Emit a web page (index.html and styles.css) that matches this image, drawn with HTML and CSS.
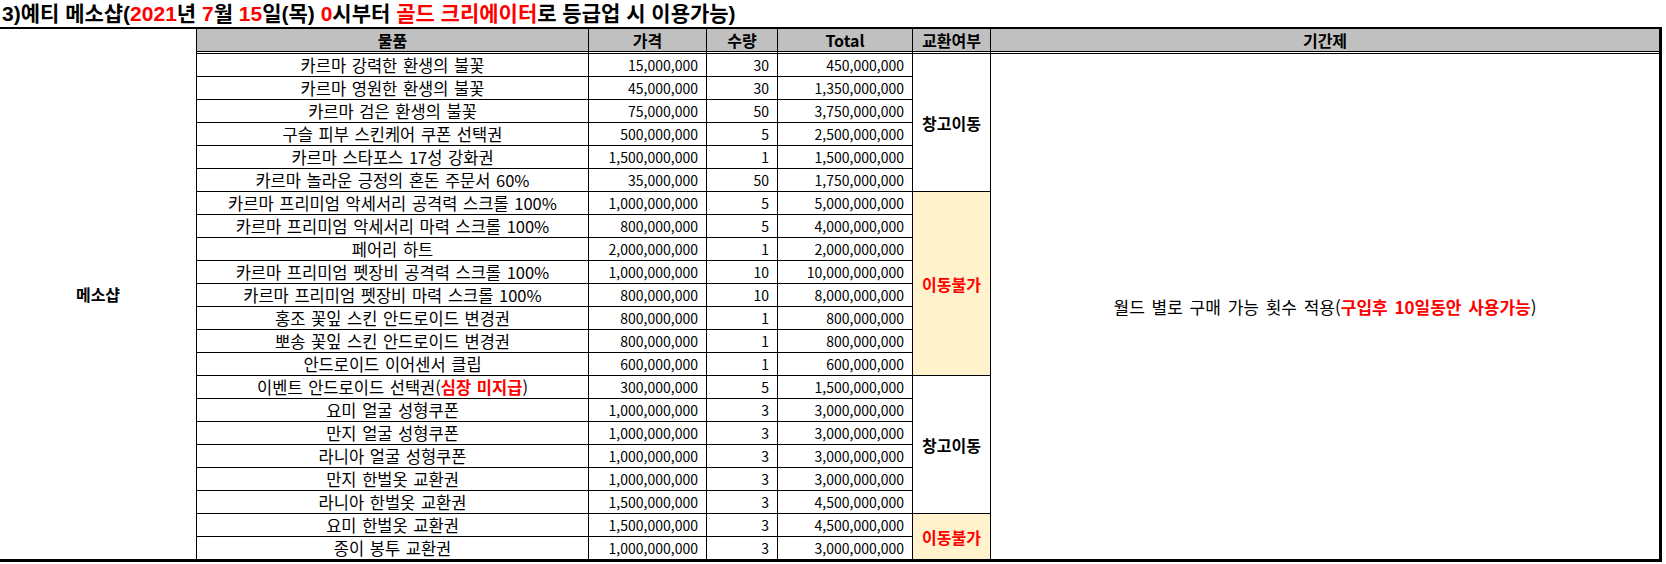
FILE: index.html
```html
<!DOCTYPE html>
<html lang="ko">
<head>
<meta charset="utf-8">
<title>예티 메소샵</title>
<link rel="stylesheet" href="styles.css">
</head>
<body>
<div class="title">3)예티 메소샵(<span class="red">2021</span>년 <span class="red">7</span>월 <span class="red">15</span>일(목) <span class="red">0</span>시부터 <span class="red">골드 크리에이터</span>로 등급업 시 이용가능)</div>
<div class="sheet">
  <div class="cell shop">메소샵</div>
  <div class="cell hd c-name">물품</div>
  <div class="cell hd c-price">가격</div>
  <div class="cell hd c-qty">수량</div>
  <div class="cell hd c-total">Total</div>
  <div class="cell hd c-swap">교환여부</div>
  <div class="cell hd c-period">기간제</div>

  <div class="cell c-name">카르마 강력한 환생의 불꽃</div>
  <div class="cell num c-price">15,000,000</div>
  <div class="cell num c-qty">30</div>
  <div class="cell num c-total">450,000,000</div>
  <div class="cell c-swap swap-move span6">창고이동</div>
  <div class="cell c-period period">월드 별로 구매 가능 횟수 적용(<span class="red strong">구입후 10일동안 사용가능</span>)</div>

  <div class="cell c-name">카르마 영원한 환생의 불꽃</div>
  <div class="cell num c-price">45,000,000</div>
  <div class="cell num c-qty">30</div>
  <div class="cell num c-total">1,350,000,000</div>

  <div class="cell c-name">카르마 검은 환생의 불꽃</div>
  <div class="cell num c-price">75,000,000</div>
  <div class="cell num c-qty">50</div>
  <div class="cell num c-total">3,750,000,000</div>

  <div class="cell c-name">구슬 피부 스킨케어 쿠폰 선택권</div>
  <div class="cell num c-price">500,000,000</div>
  <div class="cell num c-qty">5</div>
  <div class="cell num c-total">2,500,000,000</div>

  <div class="cell c-name">카르마 스타포스 17성 강화권</div>
  <div class="cell num c-price">1,500,000,000</div>
  <div class="cell num c-qty">1</div>
  <div class="cell num c-total">1,500,000,000</div>

  <div class="cell c-name">카르마 놀라운 긍정의 혼돈 주문서 60%</div>
  <div class="cell num c-price">35,000,000</div>
  <div class="cell num c-qty">50</div>
  <div class="cell num c-total">1,750,000,000</div>

  <div class="cell c-name">카르마 프리미엄 악세서리 공격력 스크롤 100%</div>
  <div class="cell num c-price">1,000,000,000</div>
  <div class="cell num c-qty">5</div>
  <div class="cell num c-total">5,000,000,000</div>
  <div class="cell c-swap swap-lock span8">이동불가</div>

  <div class="cell c-name">카르마 프리미엄 악세서리 마력 스크롤 100%</div>
  <div class="cell num c-price">800,000,000</div>
  <div class="cell num c-qty">5</div>
  <div class="cell num c-total">4,000,000,000</div>

  <div class="cell c-name">페어리 하트</div>
  <div class="cell num c-price">2,000,000,000</div>
  <div class="cell num c-qty">1</div>
  <div class="cell num c-total">2,000,000,000</div>

  <div class="cell c-name">카르마 프리미엄 펫장비 공격력 스크롤 100%</div>
  <div class="cell num c-price">1,000,000,000</div>
  <div class="cell num c-qty">10</div>
  <div class="cell num c-total">10,000,000,000</div>

  <div class="cell c-name">카르마 프리미엄 펫장비 마력 스크롤 100%</div>
  <div class="cell num c-price">800,000,000</div>
  <div class="cell num c-qty">10</div>
  <div class="cell num c-total">8,000,000,000</div>

  <div class="cell c-name">홍조 꽃잎 스킨 안드로이드 변경권</div>
  <div class="cell num c-price">800,000,000</div>
  <div class="cell num c-qty">1</div>
  <div class="cell num c-total">800,000,000</div>

  <div class="cell c-name">뽀송 꽃잎 스킨 안드로이드 변경권</div>
  <div class="cell num c-price">800,000,000</div>
  <div class="cell num c-qty">1</div>
  <div class="cell num c-total">800,000,000</div>

  <div class="cell c-name">안드로이드 이어센서 클립</div>
  <div class="cell num c-price">600,000,000</div>
  <div class="cell num c-qty">1</div>
  <div class="cell num c-total">600,000,000</div>

  <div class="cell c-name">이벤트 안드로이드 선택권(<span class="red strong">심장 미지급</span>)</div>
  <div class="cell num c-price">300,000,000</div>
  <div class="cell num c-qty">5</div>
  <div class="cell num c-total">1,500,000,000</div>
  <div class="cell c-swap swap-move span6">창고이동</div>

  <div class="cell c-name">요미 얼굴 성형쿠폰</div>
  <div class="cell num c-price">1,000,000,000</div>
  <div class="cell num c-qty">3</div>
  <div class="cell num c-total">3,000,000,000</div>

  <div class="cell c-name">만지 얼굴 성형쿠폰</div>
  <div class="cell num c-price">1,000,000,000</div>
  <div class="cell num c-qty">3</div>
  <div class="cell num c-total">3,000,000,000</div>

  <div class="cell c-name">라니아 얼굴 성형쿠폰</div>
  <div class="cell num c-price">1,000,000,000</div>
  <div class="cell num c-qty">3</div>
  <div class="cell num c-total">3,000,000,000</div>

  <div class="cell c-name">만지 한벌옷 교환권</div>
  <div class="cell num c-price">1,000,000,000</div>
  <div class="cell num c-qty">3</div>
  <div class="cell num c-total">3,000,000,000</div>

  <div class="cell c-name">라니아 한벌옷 교환권</div>
  <div class="cell num c-price">1,500,000,000</div>
  <div class="cell num c-qty">3</div>
  <div class="cell num c-total">4,500,000,000</div>

  <div class="cell c-name">요미 한벌옷 교환권</div>
  <div class="cell num c-price">1,500,000,000</div>
  <div class="cell num c-qty">3</div>
  <div class="cell num c-total">4,500,000,000</div>
  <div class="cell c-swap swap-lock span2">이동불가</div>

  <div class="cell c-name">종이 봉투 교환권</div>
  <div class="cell num c-price">1,000,000,000</div>
  <div class="cell num c-qty">3</div>
  <div class="cell num c-total">3,000,000,000</div>
</div>
</body>
</html>
```

FILE: styles.css
```css
html, body {
  margin: 0;
  padding: 0;
  background: #fff;
}

body {
  font-family: "Noto Sans CJK KR", "Noto Sans", sans-serif;
  color: #000;
}

.title {
  height: 27px;
  line-height: 27px;
  padding-left: 2px;
  font-family: "Liberation Sans", "Noto Sans CJK KR", sans-serif;
  font-size: 21px;
  font-weight: 700;
  white-space: nowrap;
}

.red {
  color: #ff0000;
}

.strong {
  font-weight: 700;
}

.sheet {
  display: grid;
  grid-template-columns: 196px 391px 117px 70px 134px 77px 668px;
  grid-template-rows: 24px repeat(22, 22px);
  gap: 1px;
  width: max-content;
  background: #000;
  border-top: 2px solid #000;
  border-right: 3px solid #000;
  border-bottom: 3px solid #000;
}

.cell {
  background: #fff;
  display: flex;
  align-items: center;
  justify-content: center;
  font-size: 16px;
  line-height: 22px;
  white-space: nowrap;
  overflow: hidden;
}

.c-name {
  grid-column: 2;
  font-size: 16.5px;
  word-spacing: 1px;
}
.c-price { grid-column: 3; }
.c-qty { grid-column: 4; }
.c-total { grid-column: 5; }
.c-swap { grid-column: 6; }
.c-period { grid-column: 7; }

.hd {
  background: #c0c0c0;
  font-size: 16px;
  font-weight: 700;
  word-spacing: 0;
  border-bottom: 1px solid #fff;
  box-shadow: inset 0 -1px 0 #000;
  padding-bottom: 1px;
}

.shop {
  grid-column: 1;
  grid-row: span 23;
  font-weight: 700;
}

.num {
  justify-content: flex-end;
  padding-right: 8px;
  font-size: 14px;
}

.swap-move {
  font-weight: 700;
}

.swap-lock {
  background: #fff2cc;
  color: #ff0000;
  font-weight: 700;
}

.span2 { grid-row: span 2; }
.span6 { grid-row: span 6; }
.span8 { grid-row: span 8; }

.period {
  grid-row: span 22;
  font-size: 17px;
  word-spacing: 2px;
}
```
